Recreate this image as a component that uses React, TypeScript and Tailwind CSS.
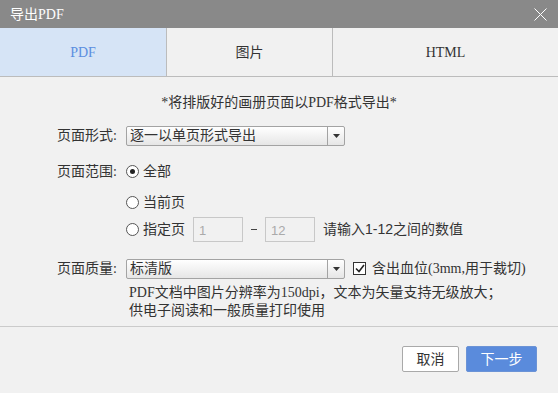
import { useState } from 'react';

const Select = ({ value }: { value: string }) => (
  <div className="flex h-[20px] w-[219px] items-stretch rounded-[2px] border border-[#a3a3a3] bg-gradient-to-b from-white to-[#e6e6e6]">
    <div className="flex-1 pl-[3px] text-[14px] leading-[18px] text-[#333]">{value}</div>
    <div className="flex w-[17px] items-center justify-center border-l border-[#a3a3a3]">
      <svg width="7" height="4" viewBox="0 0 7 4">
        <path d="M0 0h7L3.5 4z" fill="#333" />
      </svg>
    </div>
  </div>
);

const Radio = ({ checked }: { checked: boolean }) => (
  <div className="flex h-[13px] w-[13px] items-center justify-center rounded-full border border-[#555] bg-white">
    {checked && <div className="h-[5px] w-[5px] rounded-full bg-[#222]" />}
  </div>
);

const App = () => {
  const [tab, setTab] = useState('PDF');
  const [range, setRange] = useState('all');

  return (
    <div
      className="flex h-[393px] w-[558px] flex-col bg-[#f1f1f1] text-[14px] text-[#333]"
      style={{ fontFamily: '"Liberation Serif", "Noto Sans CJK SC", serif' }}
    >
      {/* 标题栏 */}
      <div className="flex h-[28px] items-center justify-between bg-[#898989] pl-[10px] pr-[11px]">
        <span className="text-[14px] text-white">导出PDF</span>
        <svg width="13" height="13" viewBox="0 0 13 13">
          <path d="M0.5 0.5l12 12M12.5 0.5l-12 12" stroke="#fff" strokeWidth="1" />
        </svg>
      </div>

      {/* 标签页 */}
      <div className="flex h-[49px] border-b border-[#bcbcbc]">
        {['PDF', '图片', 'HTML'].map((t, i) => (
          <div
            key={t}
            onClick={() => setTab(t)}
            className={`flex cursor-pointer items-center justify-center ${
              i === 0 ? 'w-[166px]' : i === 1 ? 'w-[167px] border-x border-[#bcbcbc]' : 'flex-1'
            } ${tab === t ? 'bg-[#d6e4f6] text-[#5b8ee0]' : 'bg-[#f1f1f1] text-[#333]'}`}
          >
            {t}
          </div>
        ))}
      </div>

      {/* 内容 */}
      <div className="flex flex-1 flex-col">
        <div className="mt-[16px] text-center leading-[20px]">*将排版好的画册页面以PDF格式导出*</div>

        <div className="mt-[12px] flex items-center">
          <div className="ml-[57px] w-[69px]">页面形式:</div>
          <Select value="逐一以单页形式导出" />
        </div>

        <div className="mt-[15px] flex items-center">
          <div className="ml-[57px] w-[69px]">页面范围:</div>
          <div className="flex cursor-pointer items-center gap-[4px]" onClick={() => setRange('all')}>
            <Radio checked={range === 'all'} />
            <span>全部</span>
          </div>
        </div>

        <div className="mt-[10px] flex items-center pl-[126px]">
          <div className="flex cursor-pointer items-center gap-[4px]" onClick={() => setRange('cur')}>
            <Radio checked={range === 'cur'} />
            <span>当前页</span>
          </div>
        </div>

        <div className="mt-[4px] flex items-center pl-[126px]">
          <div className="flex cursor-pointer items-center gap-[4px]" onClick={() => setRange('set')}>
            <Radio checked={range === 'set'} />
            <span>指定页</span>
          </div>
          <div
            className="ml-[8px] h-[25px] w-[50px] border border-[#c8c8c8] pl-[5px] text-[13px] leading-[26px] text-[#aaa]"
            style={{ fontFamily: '"Liberation Sans", sans-serif' }}
          >
            1
          </div>
          <div className="mx-[8px] h-px w-[6px] bg-[#444]" />
          <div
            className="h-[25px] w-[50px] border border-[#c8c8c8] pl-[5px] text-[13px] leading-[26px] text-[#aaa]"
            style={{ fontFamily: '"Liberation Sans", sans-serif' }}
          >
            12
          </div>
          <span className="ml-[8px]" style={{ fontFamily: '"Liberation Sans", "Noto Sans CJK SC", sans-serif' }}>
            请输入1-12之间的数值
          </span>
        </div>

        <div className="mt-[16px] flex items-center">
          <div className="ml-[57px] w-[69px]">页面质量:</div>
          <Select value="标清版" />
          <div className="ml-[8px] flex h-[13px] w-[13px] items-center justify-center border border-[#333] bg-white">
            <svg width="10" height="9" viewBox="0 0 10 9">
              <path d="M1 4.5l3 3L9 1" stroke="#222" strokeWidth="1.6" fill="none" />
            </svg>
          </div>
          <span className="ml-[6px]">含出血位(3mm,用于裁切)</span>
        </div>

        <div className="mt-[5px] pl-[129px] leading-[18px]">
          <div>PDF文档中图片分辨率为150dpi，文本为矢量支持无级放大；</div>
          <div>供电子阅读和一般质量打印使用</div>
        </div>

        <div className="mt-[6px] border-t border-[#cbcbcb]" />

        <div className="mt-[19px] flex justify-end gap-[7px] pr-[21px]">
          <button className="h-[26px] w-[57px] rounded-[2px] border border-[#a9a9a9] bg-white text-[14px] text-[#333]">
            取消
          </button>
          <button className="h-[26px] w-[71px] rounded-[2px] border border-[#6b93d6] bg-[#5a8bdc] text-[14px] text-white">
            下一步
          </button>
        </div>
      </div>
    </div>
  );
};

export default App;
